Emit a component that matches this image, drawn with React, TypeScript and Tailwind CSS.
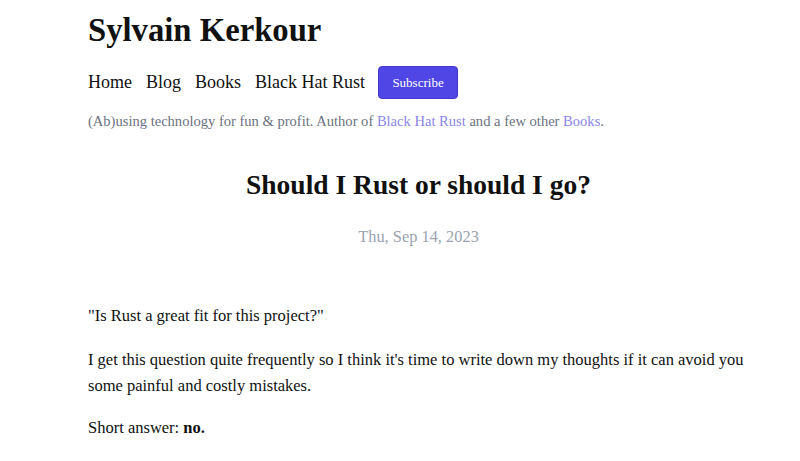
export default function App() {
  return (
    <div className="min-h-[461px] bg-white text-[#111] font-['Liberation_Serif',serif]">
      <div className="ml-[88px] w-[661px] pt-[10px]">
        <h1 className="text-[32.7px] font-bold leading-[40px]">Sylvain Kerkour</h1>
        <nav className="mt-[16px] flex items-center gap-[14px] text-[18px]">
          <span>Home</span>
          <span>Blog</span>
          <span>Books</span>
          <span>Black Hat Rust</span>
          <button className="-ml-[1px] h-[33px] w-[80px] rounded-[4px] border border-[#4338ca] bg-[#4f46e5] text-[13px] text-white">Subscribe</button>
        </nav>
        <p className="mt-[12px] text-[14.55px] text-[#6b7280]">
          (Ab)using technology for fun &amp; profit. Author of <span className="text-[#8b85e6]">Black Hat Rust</span> and a few other <span className="text-[#8b85e6]">Books</span>.
        </p>
        <h2 className="mt-[31px] text-center text-[27.5px] font-bold">Should I Rust or should I go?</h2>
        <p className="mt-[20px] text-center text-[16.4px] text-[#9ca3af]">Thu, Sep 14, 2023</p>
        <div className="mt-[53px] text-[16.5px] leading-[26px]">
          <p>"Is Rust a great fit for this project?"</p>
          <p className="mt-[18px]">I get this question quite frequently so I think it's time to write down my thoughts if it can avoid you some painful and costly mistakes.</p>
          <p className="mt-[16px]">Short answer: <b>no.</b></p>
        </div>
      </div>
    </div>
  );
}
